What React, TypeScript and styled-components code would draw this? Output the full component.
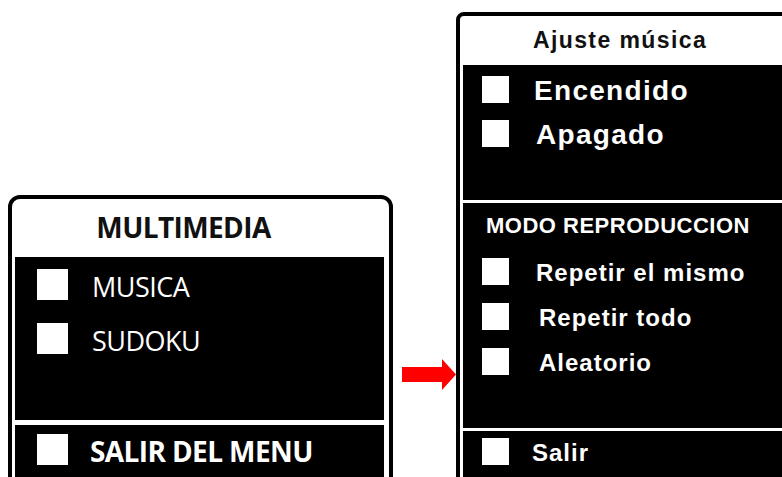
import React from "react";
import styled, { createGlobalStyle } from "styled-components";

const GlobalStyle = createGlobalStyle`
  html, body {
    margin: 0;
    padding: 0;
    background: #fff;
  }
  body {
    width: 782px;
    height: 477px;
    overflow: hidden;
  }
`;

const Page = styled.div`
  display: flex;
  align-items: flex-start;
  width: 782px;
  height: 477px;
  overflow: hidden;
`;

// outer black rounded frame of a screen
const Frame = styled.div<{ $top: number; $left: number; $width: number; $radius: number; $gap: number }>`
  flex: none;
  box-sizing: border-box;
  margin-top: ${(p) => p.$top}px;
  margin-left: ${(p) => p.$left}px;
  width: ${(p) => p.$width}px;
  border: 4px solid #000;
  border-radius: ${(p) => p.$radius}px;
  padding: 0 5px 0 3px;
  background: #fff;
  display: flex;
  flex-direction: column;
  gap: ${(p) => p.$gap}px;
`;

const Header = styled.div<{ $height: number; $font: string; $size: number; $spacing: number; $offset: number }>`
  height: ${(p) => p.$height}px;
  box-sizing: border-box;
  padding-right: ${(p) => p.$offset}px;
  padding-top: 2px;
  display: flex;
  align-items: center;
  justify-content: center;
  font-family: ${(p) => p.$font};
  font-weight: 700;
  font-size: ${(p) => p.$size}px;
  letter-spacing: ${(p) => p.$spacing}px;
  color: #111;
`;

const Block = styled.div<{ $height: number; $padTop: number; $rowGap: number }>`
  height: ${(p) => p.$height}px;
  box-sizing: border-box;
  background: #000;
  padding-top: ${(p) => p.$padTop}px;
  display: flex;
  flex-direction: column;
  gap: ${(p) => p.$rowGap}px;
`;

const Row = styled.div<{ $pad: number; $gap: number; $size: number }>`
  display: flex;
  align-items: center;
  height: ${(p) => p.$size}px;
  padding-left: ${(p) => p.$pad}px;
  gap: ${(p) => p.$gap}px;
`;

const Box = styled.span<{ $size: number }>`
  flex: none;
  width: ${(p) => p.$size}px;
  height: ${(p) => p.$size}px;
  background: #fff;
`;

const Label = styled.span<{ $font: string; $size: number; $weight: number; $spacing: number; $shift?: number }>`
  font-family: ${(p) => p.$font};
  font-size: ${(p) => p.$size}px;
  font-weight: ${(p) => p.$weight};
  letter-spacing: ${(p) => p.$spacing}px;
  color: #fff;
  line-height: 1;
  white-space: nowrap;
  transform: translateY(${(p) => p.$shift ?? 0}px);
`;

const SectionTitle = styled.div`
  padding: 12px 0 0 23px;
  height: 37px;
  box-sizing: border-box;
  font-family: "Liberation Sans", Arial, sans-serif;
  font-weight: 700;
  font-size: 22px;
  letter-spacing: 0.5px;
  color: #fff;
  line-height: 1;
`;

const Arrow = styled.svg`
  flex: none;
  margin-top: 359px;
  margin-left: 9px;
`;

const MYRIAD = `"Open Sans", "Noto Sans", sans-serif`;
const HELV = `"Liberation Sans", Arial, sans-serif`;

const LeftItem = ({ text, bold, size }: { text: string; bold?: boolean; size: number }) => (
  <Row $pad={22} $gap={bold ? 22 : 24} $size={32}>
    <Box $size={31} />
    <Label $font={MYRIAD} $size={size} $weight={bold ? 700 : 400} $spacing={bold ? -0.6 : -0.5} $shift={2}>
      {text}
    </Label>
  </Row>
);

const RightItem = ({ text, size, gap, spacing }: { text: string; size: number; gap: number; spacing: number }) => (
  <Row $pad={19} $gap={gap} $size={27}>
    <Box $size={27} />
    <Label $font={HELV} $size={size} $weight={700} $spacing={spacing} $shift={1}>
      {text}
    </Label>
  </Row>
);

export default function App() {
  return (
    <>
      <GlobalStyle />
      <Page>
        <Frame $top={195} $left={8} $width={385} $radius={12} $gap={5}>
          <Header $height={53} $font={MYRIAD} $size={28} $spacing={-0.6} $offset={32}>
            MULTIMEDIA
          </Header>
          <Block $height={163} $padTop={11} $rowGap={22}>
            <LeftItem text="MUSICA" size={27} />
            <LeftItem text="SUDOKU" size={27} />
          </Block>
          <Block $height={70} $padTop={8} $rowGap={0}>
            <LeftItem text="SALIR DEL MENU" size={28} bold />
          </Block>
        </Frame>

        <Arrow width={54} height={31} viewBox="0 0 54 31">
          <rect x={0} y={8} width={41} height={15} fill="#ff0000" />
          <polygon points="40,0 54,15.5 40,31" fill="#ff0000" />
        </Arrow>

        <Frame $top={12} $left={0} $width={340} $radius={8} $gap={3}>
          <Header $height={46} $font={HELV} $size={23} $spacing={1.4} $offset={10}>
            Ajuste música
          </Header>
          <Block $height={135} $padTop={11} $rowGap={17}>
            <RightItem text="Encendido" size={28} gap={25} spacing={1.3} />
            <RightItem text="Apagado" size={28} gap={27} spacing={1.3} />
          </Block>
          <Block $height={225} $padTop={0} $rowGap={18}>
            <SectionTitle>MODO REPRODUCCION</SectionTitle>
            <RightItem text="Repetir el mismo" size={24} gap={27} spacing={1} />
            <RightItem text="Repetir todo" size={24} gap={30} spacing={1} />
            <RightItem text="Aleatorio" size={24} gap={30} spacing={1} />
          </Block>
          <Block $height={60} $padTop={7} $rowGap={0}>
            <RightItem text="Salir" size={24} gap={23} spacing={1} />
          </Block>
        </Frame>
      </Page>
    </>
  );
}
